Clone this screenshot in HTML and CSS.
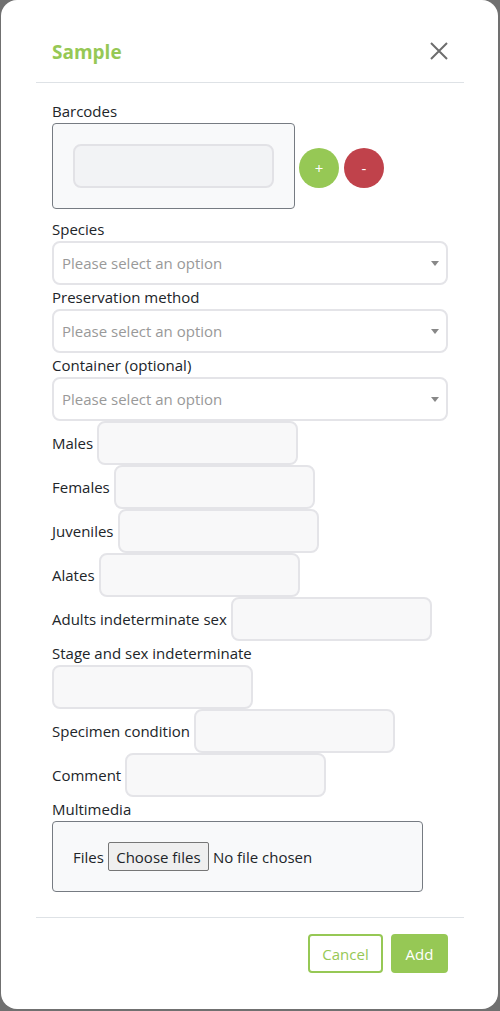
FILE: index.html
```html
<!DOCTYPE html>
<html lang="en">
<head>
<meta charset="utf-8">
<title>Sample</title>
<link rel="stylesheet" href="styles.css">
</head>
<body>
<div class="modal">
  <div class="modal-header">
    <h5 class="modal-title">Sample</h5>
    <button class="close" type="button" aria-label="Close">
      <svg width="18" height="18" viewBox="0 0 18 18"><path d="M1 1 L17 17 M17 1 L1 17" stroke="#6d6d6d" stroke-width="2" fill="none"/></svg>
    </button>
  </div>
  <div class="modal-body">
    <div class="field">
      <label class="lbl">Barcodes</label>
      <div class="barcode-row">
        <div class="barcode-box"><span class="input"></span></div>
        <button class="circle plus" type="button">+</button>
        <button class="circle minus" type="button">-</button>
      </div>
    </div>
    <div class="field first-select">
      <label class="lbl">Species</label>
      <div class="select"><span class="ph">Please select an option</span><span class="arrow"></span></div>
    </div>
    <div class="field">
      <label class="lbl">Preservation method</label>
      <div class="select"><span class="ph">Please select an option</span><span class="arrow"></span></div>
    </div>
    <div class="field">
      <label class="lbl">Container (optional)</label>
      <div class="select"><span class="ph">Please select an option</span><span class="arrow"></span></div>
    </div>
    <div class="inline-field"><label class="lbl">Males</label><span class="input"></span></div>
    <div class="inline-field"><label class="lbl">Females</label><span class="input"></span></div>
    <div class="inline-field"><label class="lbl">Juveniles</label><span class="input"></span></div>
    <div class="inline-field"><label class="lbl">Alates</label><span class="input"></span></div>
    <div class="inline-field"><label class="lbl">Adults indeterminate sex</label><span class="input"></span></div>
    <div class="inline-field"><label class="lbl">Stage and sex indeterminate</label><span class="input"></span></div>
    <div class="inline-field"><label class="lbl">Specimen condition</label><span class="input"></span></div>
    <div class="inline-field"><label class="lbl">Comment</label><span class="input"></span></div>
    <div class="field">
      <label class="lbl">Multimedia</label>
      <div class="file-box">
        <span class="files-lbl">Files</span>
        <span class="file-btn">Choose files</span>
        <span class="file-none">No file chosen</span>
      </div>
    </div>
  </div>
  <div class="modal-footer">
    <button class="btn btn-outline" type="button">Cancel</button>
    <button class="btn btn-fill" type="button">Add</button>
  </div>
</div>
</body>
</html>
```
FILE: styles.css
```css
* { box-sizing: border-box; }
html, body { margin: 0; padding: 0; }
body {
  background: #707070;
  font-family: "Open Sans", "Noto Sans", sans-serif;
  font-size: 15px;
  color: #212529;
  width: 500px;
  height: 1011px;
  overflow: hidden;
}
.modal {
  background: #fff;
  margin: 0 2px 0 1px;
  height: 1009px;
  border-radius: 16px;
  padding: 20px 34px 0 35px;
}
.modal-header {
  display: flex;
  align-items: center;
  justify-content: space-between;
  padding: 17px 16px 15px;
  border-bottom: 1px solid #dee2e6;
}
.modal-title {
  margin: 0;
  font-size: 19px;
  font-weight: 700;
  line-height: 30px;
  color: #96c855;
}
.close {
  border: 0;
  background: transparent;
  padding: 0;
  margin: -3px 0 0 0;
  width: 18px;
  height: 18px;
  display: flex;
}
.modal-body {
  padding: 16px 16px 25px;
}
.lbl {
  display: block;
  line-height: 24px;
  white-space: nowrap;
}
.barcode-row {
  display: flex;
  align-items: flex-start;
}
.barcode-box {
  width: 243px;
  height: 86px;
  border: 1px solid #767b82;
  border-radius: 4px;
  background: #f8f9fa;
  padding: 20px;
}
.barcode-box .input {
  background: #f2f3f5;
  border-color: #e2e2e6;
}
.circle {
  width: 40px;
  height: 40px;
  border-radius: 50%;
  border: 0;
  color: #fff;
  font-family: "Open Sans", sans-serif;
  font-size: 15px;
  line-height: 40px;
  padding: 0;
  margin-top: 25px;
}
.plus { background: #96c855; margin-left: 4px; }
.minus { background: #c0424b; margin-left: 5px; }
.first-select { margin-top: 8px; }
.select {
  position: relative;
  height: 44px;
  border: 2px solid #e4e4e8;
  border-radius: 8px;
  padding: 0 8px;
  display: flex;
  align-items: center;
}
.ph { color: #999; font-size: 15px; }
.arrow {
  position: absolute;
  right: 7px;
  top: 18px;
  width: 0;
  height: 0;
  border-left: 4px solid transparent;
  border-right: 4px solid transparent;
  border-top: 5px solid #888;
}
.input {
  display: block;
  width: 201px;
  height: 44px;
  background: #f8f8f9;
  border: 2px solid #e4e4e8;
  border-radius: 8px;
}
.inline-field {
  display: flex;
  flex-wrap: wrap;
  align-items: center;
  column-gap: 4px;
}
.file-box {
  width: 371px;
  height: 71px;
  border: 1px solid #767b82;
  border-radius: 4px;
  background: #f8f9fa;
  padding: 0 20px;
  display: flex;
  align-items: center;
}
.files-lbl { margin-right: 4px; }
.file-btn {
  display: inline-flex;
  align-items: center;
  justify-content: center;
  height: 29px;
  width: 101px;
  background: #efefef;
  border: 1px solid #767676;
  border-radius: 2px;
  margin-right: 4px;
}
.modal-footer {
  border-top: 1px solid #dee2e6;
  display: flex;
  justify-content: flex-end;
  gap: 8px;
  padding: 16px 16px;
}
.btn {
  height: 39px;
  padding: 0;
  border-radius: 4px;
  font-family: "Open Sans", sans-serif;
  font-size: 15px;
  border: 2px solid #96c855;
}
.btn-outline { background: #fff; color: #96c855; width: 75px; }
.btn-fill { background: #96c855; color: #fff; width: 57px; }
```
